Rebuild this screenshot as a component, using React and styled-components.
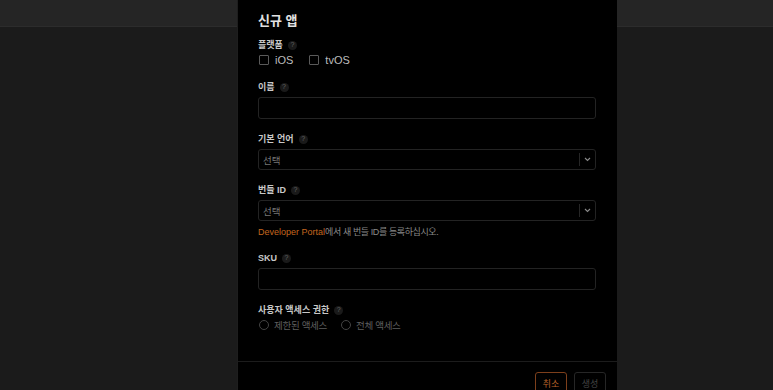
import React from 'react'
import styled, { createGlobalStyle } from 'styled-components'

const Global = createGlobalStyle`
  html, body { margin: 0; padding: 0; background: #1b1b1b; }
  body {
    font-family: "Liberation Sans", "Noto Sans CJK KR", sans-serif;
    overflow: hidden;
  }
`

const Page = styled.div`
  position: relative;
  width: 773px;
  height: 390px;
  background: #1b1b1b;
  overflow: hidden;
`

const TopBar = styled.div`
  height: 26px;
  background: #252525;
  border-bottom: 1px solid #2c2c2c;
`

const Modal = styled.div`
  position: absolute;
  top: 0;
  left: 238px;
  width: 379px;
  height: 420px;
  background: #000;
  box-shadow: -1px 0 0 #1e1e1e;
  display: flex;
  flex-direction: column;
`

const Body = styled.div`
  padding: 13px 21px 29px 20px;
  display: flex;
  flex-direction: column;
`

const Title = styled.h2`
  margin: 0 0 10px;
  font-size: 13px;
  line-height: 16px;
  font-weight: 600;
  color: #e2e2e2;
`

const Form = styled.div`
  display: flex;
  flex-direction: column;
  gap: 14px;
`

const Field = styled.div`
  display: flex;
  flex-direction: column;
  gap: ${p => p.$tight ? '2px' : '4px'};
`

const Label = styled.div`
  display: flex;
  align-items: center;
  gap: 5px;
  font-size: 9px;
  line-height: 12px;
  font-weight: 700;
  color: #c8c8c8;
`

const Help = styled.span`
  display: inline-flex;
  align-items: center;
  justify-content: center;
  width: 9px;
  height: 9px;
  border-radius: 50%;
  background: #1a1a1a;
  color: #626262;
  font-size: 7px;
  font-weight: 400;
`

const Options = styled.div`
  display: flex;
  align-items: center;
  gap: ${p => p.$gap}px;
  height: 14px;
  padding-left: 1px;
`

const Option = styled.label`
  display: inline-flex;
  align-items: center;
  gap: ${p => p.$round ? '5px' : '6px'};
  font-size: ${p => p.$round ? '9.5px' : '11px'};
  letter-spacing: ${p => p.$round ? '-0.3px' : '0'};
  color: ${p => p.$round ? '#5e5e5e' : '#bdbdbd'};
`

const Box = styled.span`
  width: 8px;
  height: 8px;
  border: 1px solid ${p => p.$round ? '#444' : '#5a5a5a'};
  border-radius: ${p => p.$round ? '50%' : '1px'};
`

const Input = styled.div`
  height: 20px;
  border: 1px solid #232323;
  border-radius: 3px;
  background: #000;
`

const Select = styled.div`
  height: 19px;
  border: 1px solid #232323;
  border-radius: 3px;
  display: flex;
  align-items: center;
  font-size: 9.5px;
  color: #777;
`

const SelectText = styled.span`
  flex: 1;
  padding-left: 4px;
`

const Divider = styled.span`
  width: 1px;
  height: 13px;
  background: #262626;
`

const Chevron = styled.span`
  width: 15px;
  display: flex;
  justify-content: center;
  align-items: center;
`

const Hint = styled.div`
  font-size: 9px;
  line-height: 12px;
  color: #8a8a8a;
  margin-top: 1px;
`

const HintRest = styled.span`
  letter-spacing: -0.4px;
`

const Link = styled.span`
  color: #c4661f;
`

const Footer = styled.div`
  border-top: 1px solid #1c1c1c;
  padding: 10px 11px 0 0;
  display: flex;
  justify-content: flex-end;
  gap: 7px;
`

const Button = styled.button`
  height: 22px;
  width: 32px;
  padding: 0;
  background: #000;
  border-radius: 3px;
  border: 1px solid ${p => p.$primary ? '#7d3f1b' : '#262626'};
  color: ${p => p.$primary ? '#b8622a' : '#444'};
  font-family: inherit;
  font-size: 9px;
`

const Q = () => <Help>?</Help>

const SelectBox = () => (
  <Select>
    <SelectText>선택</SelectText>
    <Divider />
    <Chevron>
      <svg width="7" height="5" viewBox="0 0 7 5">
        <path d="M1 1 L3.5 3.5 L6 1" fill="none" stroke="#8a8a8a" strokeWidth="1.1" />
      </svg>
    </Chevron>
  </Select>
)

export default function App() {
  return (
    <Page>
      <Global />
      <TopBar />
      <Modal>
        <Body>
          <Title>신규 앱</Title>
          <Form>
            <Field $tight>
              <Label>플랫폼 <Q /></Label>
              <Options $gap={16}>
                <Option><Box />iOS</Option>
                <Option><Box />tvOS</Option>
              </Options>
            </Field>
            <Field>
              <Label>이름 <Q /></Label>
              <Input />
            </Field>
            <Field>
              <Label>기본 언어 <Q /></Label>
              <SelectBox />
            </Field>
            <Field>
              <Label>번들 ID <Q /></Label>
              <SelectBox />
              <Hint><Link>Developer Portal</Link><HintRest>에서 새 번들 ID를 등록하십시오.</HintRest></Hint>
            </Field>
            <Field>
              <Label>SKU <Q /></Label>
              <Input />
            </Field>
            <Field $tight>
              <Label>사용자 액세스 권한 <Q /></Label>
              <Options $gap={14}>
                <Option $round><Box $round />제한된 액세스</Option>
                <Option $round><Box $round />전체 액세스</Option>
              </Options>
            </Field>
          </Form>
        </Body>
        <Footer>
          <Button $primary>취소</Button>
          <Button>생성</Button>
        </Footer>
      </Modal>
    </Page>
  )
}
